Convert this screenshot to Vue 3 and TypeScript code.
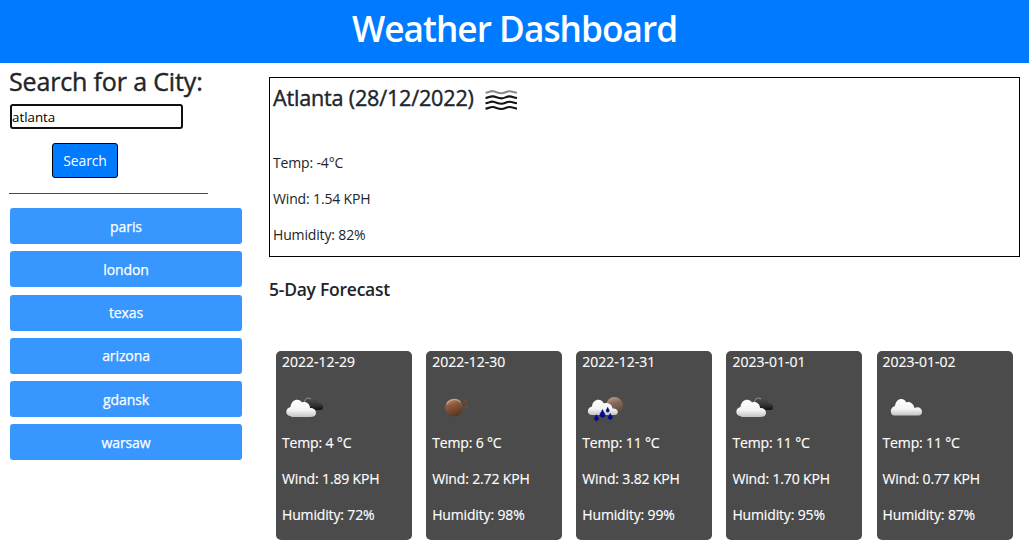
<script setup lang="ts">
import { ref } from 'vue'

type Icon = 'broken' | 'clear' | 'rain' | 'cloud'

interface Forecast {
  date: string
  icon: Icon
  temp: number
  wind: string
  humidity: number
}

const query = ref('atlanta')
const cities = ['paris', 'london', 'texas', 'arizona', 'gdansk', 'warsaw']
const days: Forecast[] = [
  { date: '2022-12-29', icon: 'broken', temp: 4, wind: '1.89', humidity: 72 },
  { date: '2022-12-30', icon: 'clear', temp: 6, wind: '2.72', humidity: 98 },
  { date: '2022-12-31', icon: 'rain', temp: 11, wind: '3.82', humidity: 99 },
  { date: '2023-01-01', icon: 'broken', temp: 11, wind: '1.70', humidity: 95 },
  { date: '2023-01-02', icon: 'cloud', temp: 11, wind: '0.77', humidity: 87 },
]
</script>

<template>
  <div class="page">
    <header><h1>Weather Dashboard</h1></header>
    <div class="layout">
      <aside>
        <h3>Search for a City:</h3>
        <input v-model="query" type="text" spellcheck="false" />
        <button class="search">Search</button>
        <hr />
        <nav>
          <button v-for="city in cities" :key="city">{{ city }}</button>
        </nav>
      </aside>
      <main>
        <section class="today">
          <div class="heading">
            <h4>Atlanta (28/12/2022)</h4>
            <svg class="mist" width="50" height="50" viewBox="0 0 50 50" fill="none" stroke-width="2.100">
              <path stroke="#8b8989" d="M8.500 17.800C12 17.500 13 15.800 16 16.200S21 18.200 24.500 18.200S29 16.200 32.500 16.200S36.500 17.500 40 17.800" />
              <path stroke="#151313" d="M8.500 23C12 22.700 13 21 16 21.400S21 23.400 24.500 23.400S29 21.400 32.500 21.400S36.500 22.700 40 23" />
              <path stroke="#151313" d="M8.500 28.300C12 28 13 26.300 16 26.700S21 28.700 24.500 28.700S29 26.700 32.500 26.700S36.500 28 40 28.300" />
              <path stroke="#151313" d="M8.500 33.600C12 33.300 13 31.600 16 32S21 34 24.500 34S29 32 32.500 32S36.500 33.300 40 33.600" />
            </svg>
          </div>
          <p>Temp: -4°C</p>
          <p>Wind: 1.54 KPH</p>
          <p>Humidity: 82%</p>
        </section>
        <h5>5-Day Forecast</h5>
        <div class="cards">
          <article v-for="day in days" :key="day.date">
            <div class="date">{{ day.date }}</div>
            <svg class="icon" width="50" height="50" viewBox="0 0 50 50">
              <defs>
                <linearGradient id="white" x1="0" y1="0" x2="0" y2="1">
                  <stop offset="0" stop-color="#fff" />
                  <stop offset=".6" stop-color="#f4f4f4" />
                  <stop offset="1" stop-color="#c4c4c4" />
                </linearGradient>
                <linearGradient id="dark" x1="0" y1="0" x2="0" y2="1">
                  <stop offset="0" stop-color="#505050" />
                  <stop offset=".6" stop-color="#343434" />
                  <stop offset="1" stop-color="#111" />
                </linearGradient>
                <linearGradient id="sun" x1=".2" y1="0" x2=".6" y2="1">
                  <stop offset="0" stop-color="#c99d82" />
                  <stop offset=".35" stop-color="#8e5b3c" />
                  <stop offset="1" stop-color="#57351f" />
                </linearGradient>
                <linearGradient id="veiled" x1=".3" y1="0" x2=".6" y2="1">
                  <stop offset="0" stop-color="#b39c8f" />
                  <stop offset=".4" stop-color="#85695a" />
                  <stop offset="1" stop-color="#5b4436" />
                </linearGradient>
              </defs>
              <template v-if="day.icon === 'broken'">
                <path fill="url(#dark)" d="M22 28V20C23 16 28 14 31 18C34 16 36 19 36 21C39 21 42 23 41 26C41 27 40 28 38 28Z" />
                <path fill="none" stroke="#999" stroke-width="1" d="M22.500 20C23 16.500 26 15 29 17" />
                <path fill="url(#white)" d="M8 34C3 33.500 3 26 8.500 25C9 17.500 17 15.500 20 20.500C24 19 28 22 28 26C33 25 36 31 32.500 34Q31 35 28 35H10Z" />
              </template>
              <template v-else-if="day.icon === 'clear'">
                <circle cx="22" cy="25.500" r="8.800" fill="url(#sun)" />
                <path fill="none" stroke="#d4ad94" stroke-width="1.200" opacity=".7" d="M15 22C17 16.800 25 15.800 28.500 20.500" />
                <path fill="#75482f" d="M31.500 19.500L33.500 17L35.500 19.500L33.500 21.500ZM32.500 25L34.500 23L36.500 25.500L34.500 27Z" />
              </template>
              <template v-else-if="day.icon === 'rain'">
                <circle cx="32.500" cy="23.500" r="8.500" fill="url(#veiled)" />
                <path fill="url(#white)" d="M10 33C4.500 33 4.500 25.500 10 24.500C10.500 16.500 19.500 15.500 22 21.500C26 20 30 22.500 30.500 26.500C36 25.500 38 32 33 33Z" />
                <path fill="#0307a8" stroke="#02055e" stroke-width=".5" d="M20.500 27.500C19.800 30 17.600 31 18 33.200C18.500 36 22.700 36 23 33.200C23.200 31 21.200 30 20.500 27.500ZM25.700 25.300C25.200 27 24 27.500 24.200 29C24.700 30.600 27 30.500 27.200 29C27.400 27.500 26.200 27 25.700 25.300ZM14.400 32.700C14 34.600 12.200 35.500 12.500 37C13 39.300 16.300 39.300 16.500 37C16.600 35.500 14.800 34.600 14.400 32.700ZM28.200 31.300C27.800 33.200 25.900 34 26.100 35.700C26.600 38 30.100 38 30.300 35.700C30.500 34 28.600 33.200 28.200 31.300Z" />
              </template>
              <path v-else fill="url(#white)" d="M11.500 33.500C6.500 33.500 6.500 25 12 24C13 16 20.500 15 23.500 20.500C27 19 30.500 22 31.500 26C35 24 39 26 39 29.500Q39 33.500 35.500 33.500Z" />
            </svg>
            <p>Temp: {{ day.temp }} °C</p>
            <p>Wind: {{ day.wind }} KPH</p>
            <p>Humidity: {{ day.humidity }}%</p>
          </article>
        </div>
      </main>
    </div>
  </div>
</template>

<style>
body {
  margin: 0;
  background: #fff;
}
</style>

<style scoped>
.page {
  box-sizing: border-box;
  height: 555px;
  overflow: hidden;
  color: #212529;
  font: 14px/36px "Open Sans", "Noto Sans", sans-serif;
}
h1, h3, h4, h5, p {
  margin: 0;
  white-space: nowrap;
}
p {
  letter-spacing: -.15px;
}
header {
  height: 63px;
  background: #007bff;
  color: #fff;
  text-align: center;
}
h1 {
  padding-top: 1px;
  font-size: 35.200px;
  font-weight: 600;
  letter-spacing: -.950px;
  line-height: 55px;
}
.layout {
  display: flex;
}
aside {
  display: flex;
  flex-direction: column;
  align-items: flex-start;
  width: 233px;
  padding-left: 9px;
}
h3 {
  font-size: 25px;
  font-weight: 400;
  letter-spacing: -.150px;
  line-height: 37px;
  -webkit-text-stroke: .4px currentColor;
}
input {
  box-sizing: border-box;
  width: 173px;
  height: 25px;
  margin: 4px 0 0 1px;
  padding: 0;
  border: 2px solid #101010;
  border-radius: 3px;
  outline: none;
  color: #000;
  font: 13.333px "Open Sans", sans-serif;
}
button {
  padding: 0;
  border: 0;
  border-radius: 3px;
  color: #fff;
  font: 14px "Open Sans", sans-serif;
  letter-spacing: -.1px;
}
.search {
  box-sizing: border-box;
  width: 66px;
  height: 35px;
  margin: 14px 0 0 43px;
  border: 1px solid #000;
  background: #007bff;
}
hr {
  width: 199px;
  height: 1px;
  margin: 15px 0 14px;
  border: 0;
  background: #4b4b4b;
}
nav {
  display: flex;
  flex-direction: column;
  gap: 7.250px;
  padding-left: 1px;
}
nav button {
  width: 232px;
  height: 36px;
  background: #3897ff;
  -webkit-text-stroke: .25px currentColor;
}
main {
  width: 751px;
  margin-left: 27px;
  padding-top: 14px;
}
.today {
  box-sizing: border-box;
  height: 180px;
  padding-left: 3px;
  border: 1px solid #000;
}
.heading {
  display: flex;
  height: 67px;
}
h4 {
  width: 204px;
  font-size: 21.600px;
  font-weight: 400;
  letter-spacing: -.200px;
  line-height: 40px;
  -webkit-text-stroke: .4px currentColor;
}
.mist {
  margin-top: -3px;
}
h5 {
  margin-top: 14px;
  font-size: 17.500px;
  font-weight: 600;
  letter-spacing: -.250px;
}
.cards {
  display: flex;
  gap: 14.150px;
  margin: 44px 0 0 7px;
}
article {
  box-sizing: border-box;
  width: 136px;
  height: 189px;
  flex: none;
  padding: 0 0 0 6px;
  border-radius: 5px;
  background: #4b4b4b;
  color: #fff;
  -webkit-text-stroke: .15px currentColor;
}
.date {
  line-height: 22px;
}
.icon {
  display: block;
  margin: 9px 0 -7px;
}
</style>
